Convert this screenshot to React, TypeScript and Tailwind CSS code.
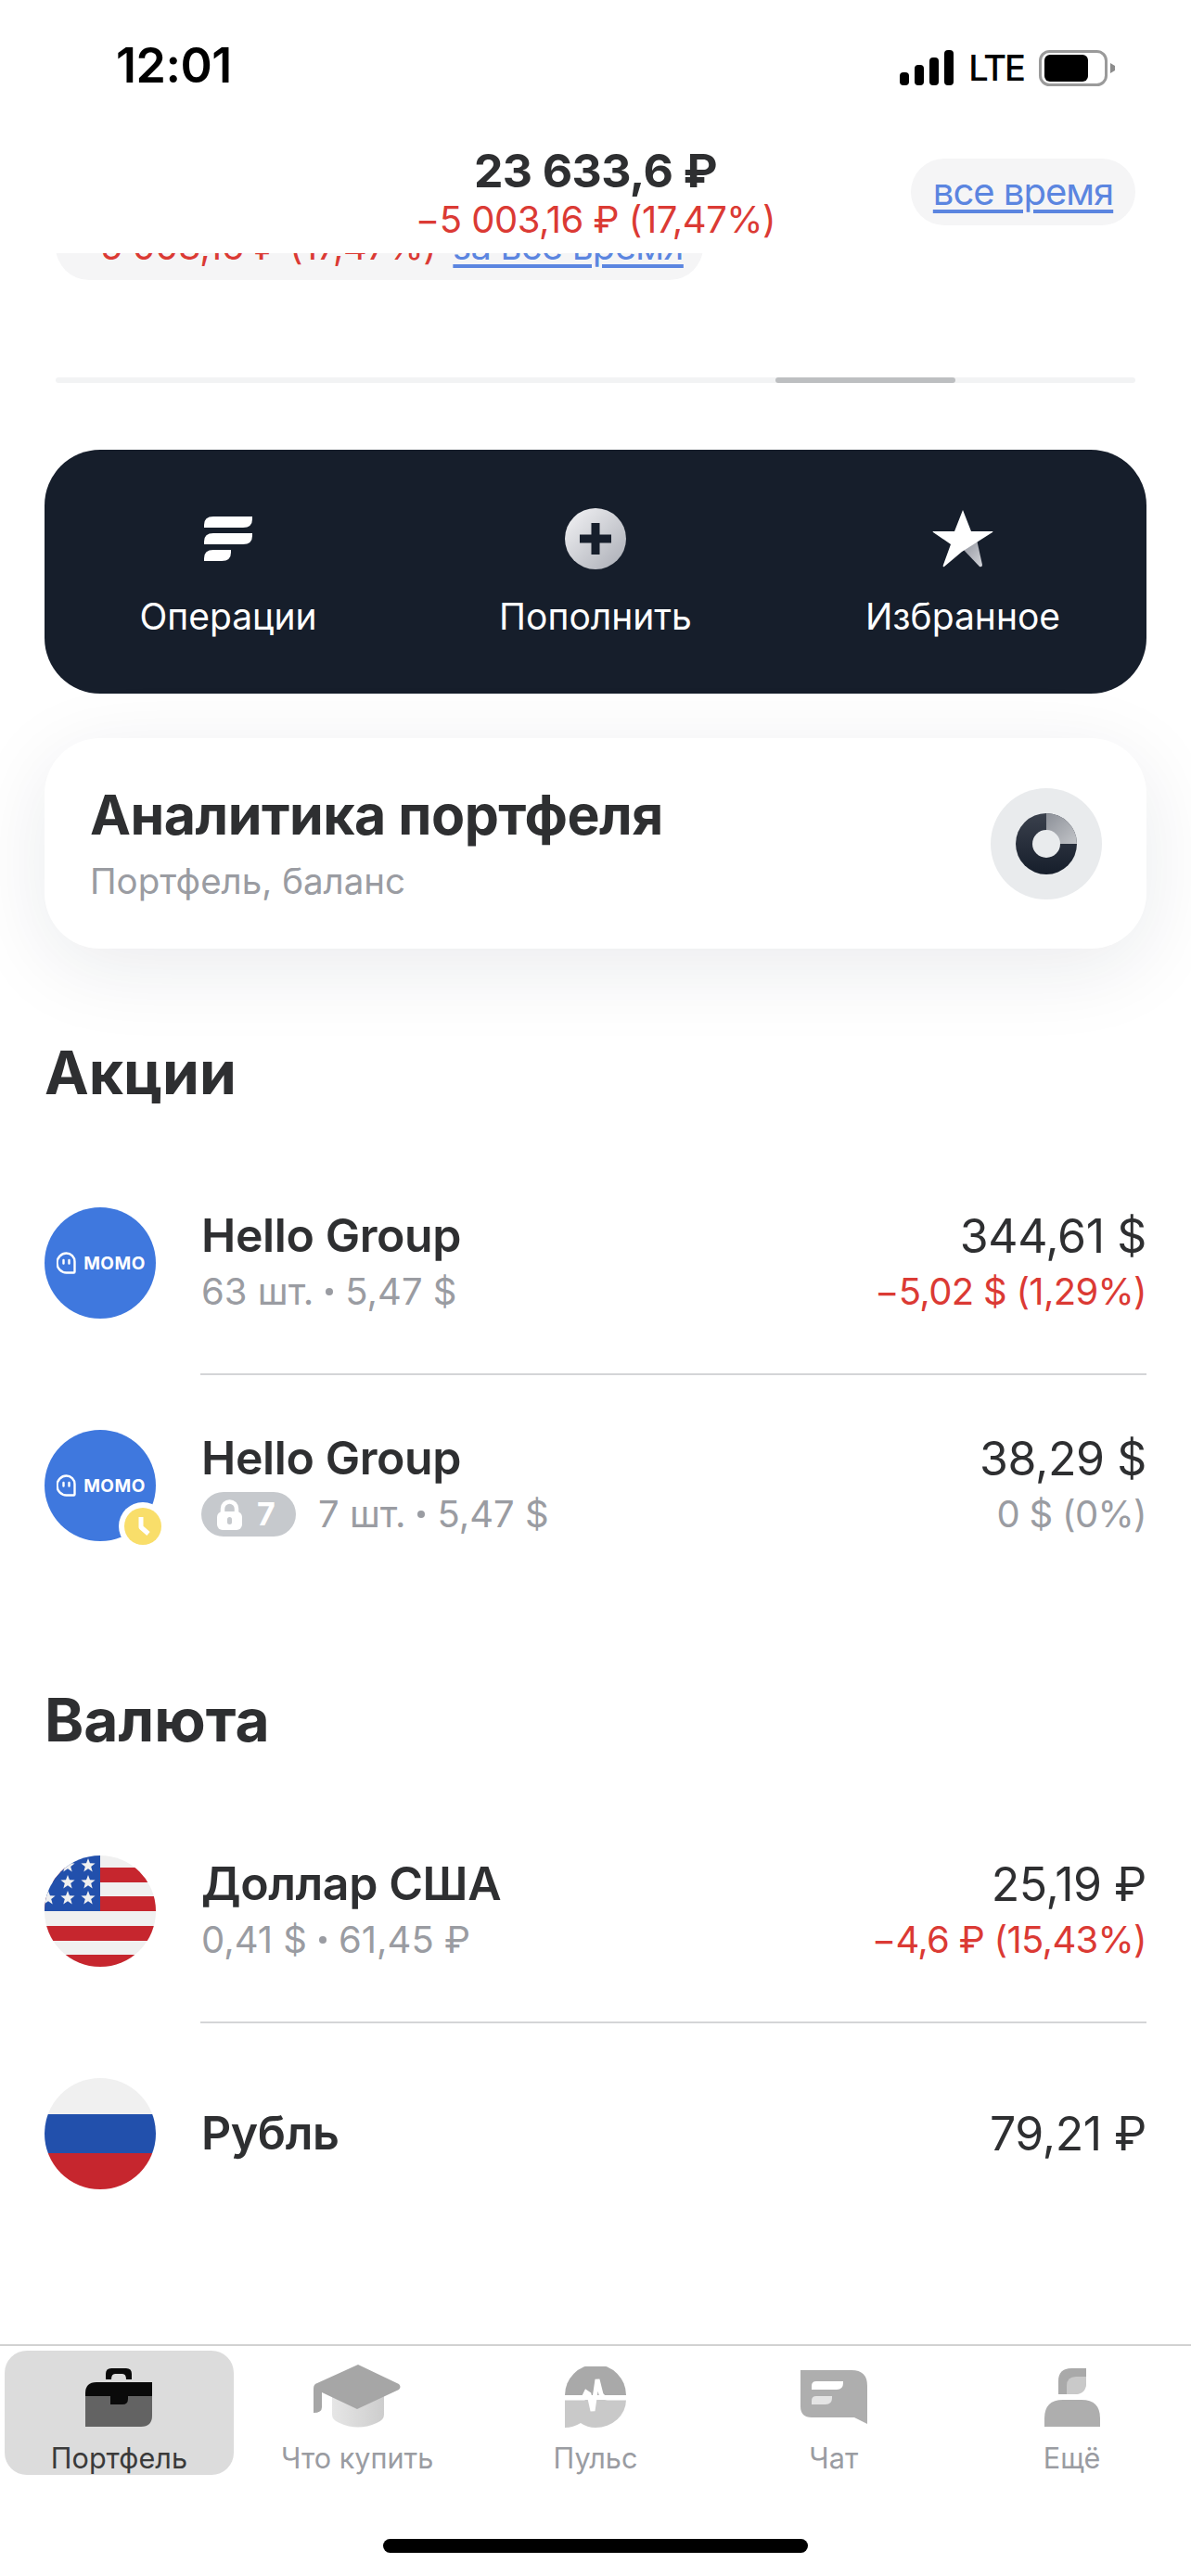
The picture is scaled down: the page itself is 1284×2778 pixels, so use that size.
import React from 'react';

const starPoints = (cx: number, cy: number, r: number) =>
  Array.from({ length: 10 }, (_, i) => {
    const rad = i % 2 === 0 ? r : r * 0.42;
    const a = (Math.PI / 5) * i - Math.PI / 2;
    return `${(cx + rad * Math.cos(a)).toFixed(2)},${(cy + rad * Math.sin(a)).toFixed(2)}`;
  }).join(' ');

const SignalIcon = () => (
  <svg width="58" height="38" viewBox="0 0 58 38" fill="#000">
    <rect x="0" y="24" width="10" height="14" rx="4" />
    <rect x="16" y="16" width="10" height="22" rx="4" />
    <rect x="32" y="8" width="10" height="30" rx="4" />
    <rect x="48" y="0" width="10" height="38" rx="4" />
  </svg>
);

const BatteryIcon = () => (
  <svg width="82" height="39" viewBox="0 0 82 39">
    <rect x="1.5" y="1.5" width="71" height="36" rx="10" fill="none" stroke="#9a9a9a" strokeWidth="3" />
    <rect x="6" y="5" width="47" height="29" rx="6" fill="#000" />
    <path d="M77 14 L82 17 V22 L77 25 Z" fill="#8c8c8c" />
  </svg>
);

const OperationsIcon = () => (
  <svg width="52" height="48" viewBox="0 0 52 48" fill="#fff">
    <path d="M0 9 Q0 0 10 0 H52 V3 Q52 12 42 12 H0 Z" />
    <path d="M0 27 Q0 18 10 18 H52 V21 Q52 30 42 30 H0 Z" />
    <path d="M0 45 Q0 36 10 36 H29 V39 Q29 48 19 48 H0 Z" />
  </svg>
);

const PlusIcon = () => (
  <svg width="66" height="66" viewBox="0 0 66 66">
    <defs>
      <linearGradient id="plusFill" x1="0" y1="0" x2="1" y2="1">
        <stop offset="0" stopColor="#f4f4f6" />
        <stop offset="1" stopColor="#a9acb4" />
      </linearGradient>
    </defs>
    <circle cx="33" cy="33" r="33" fill="url(#plusFill)" />
    <path d="M28.5 16 H37.5 V28.5 H50 V37.5 H37.5 V50 H28.5 V37.5 H16 V28.5 H28.5 Z" fill="#161e2b" />
  </svg>
);

const StarIcon = () => (
  <svg width="66" height="64" viewBox="0 0 66 64">
    <defs>
      <linearGradient id="starFill" x1="0" y1="0" x2="1" y2="1">
        <stop offset="0" stopColor="#8d909a" />
        <stop offset="1" stopColor="#d3d5da" />
      </linearGradient>
    </defs>
    <path d="M32 42 L48 33 L54 60 Q54 63 51 62 Z" fill="url(#starFill)" />
    <path
      d="M33 1 L42 24 H65 Q66 24 65 25 L32 46 L13 62 Q11 63 12 60 L20 38 L1 25 Q0 24 1 24 H24 Z"
      fill="#fff"
    />
  </svg>
);

const DonutIcon = () => (
  <svg width="66" height="66" viewBox="0 0 66 66">
    <defs>
      <linearGradient id="donutDark" x1="0" y1="0" x2="0" y2="1">
        <stop offset="0" stopColor="#3a404c" />
        <stop offset="1" stopColor="#161e2b" />
      </linearGradient>
      <linearGradient id="donutLight" x1="0" y1="0" x2="1" y2="1">
        <stop offset="0" stopColor="#8c9098" />
        <stop offset="1" stopColor="#c2c4c8" />
      </linearGradient>
    </defs>
    <circle cx="33" cy="33" r="33" fill="url(#donutDark)" />
    <path d="M33 0 A33 33 0 0 1 66 33 H33 Z" fill="url(#donutLight)" />
    <circle cx="33" cy="33" r="15" fill="#e9ebed" />
  </svg>
);

const MomoAvatar = () => (
  <div className="flex h-[120px] w-[120px] items-center justify-center gap-[8px] rounded-full bg-[#3f78de] pl-[2px]">
    <svg width="21" height="24" viewBox="0 0 21 24" fill="none" stroke="#fff" strokeWidth="2.4">
      <path d="M10.5 1.5 A9 9 0 0 1 19.5 10.5 V21.5 Q19.5 22.5 18.5 22.5 H10.5 A10 10.5 0 0 1 10.5 1.5 Z" />
      <path d="M7.5 9 V12.5 M13.5 9 V12.5" strokeLinecap="round" />
    </svg>
    <span className="text-[19px] leading-none font-bold tracking-[0.5px] text-white">MOMO</span>
  </div>
);

const UsFlag = () => (
  <svg width="120" height="120" viewBox="0 0 120 120">
    <defs>
      <clipPath id="usClip">
        <circle cx="60" cy="60" r="60" />
      </clipPath>
    </defs>
    <g clipPath="url(#usClip)">
      <rect width="120" height="120" fill="#f0f0f0" />
      <rect y="13" width="120" height="16" fill="#c6262e" />
      <rect y="44" width="120" height="16" fill="#c6262e" />
      <rect y="76" width="120" height="16" fill="#c6262e" />
      <rect y="107" width="120" height="13" fill="#c6262e" />
      <rect width="60" height="60" fill="#2250ac" />
      {[25, 47].map((x) =>
        [11, 29, 46].map((y) => <polygon key={`${x}-${y}`} points={starPoints(x, y, 8)} fill="#f0f0f0" />),
      )}
      <polygon points={starPoints(4, 46, 8)} fill="#f0f0f0" />
    </g>
  </svg>
);

const RuFlag = () => (
  <svg width="120" height="120" viewBox="0 0 120 120">
    <defs>
      <clipPath id="ruClip">
        <circle cx="60" cy="60" r="60" />
      </clipPath>
    </defs>
    <g clipPath="url(#ruClip)">
      <rect width="120" height="39" fill="#f0f0f0" />
      <rect y="39" width="120" height="42" fill="#2250ac" />
      <rect y="81" width="120" height="39" fill="#c6262e" />
    </g>
  </svg>
);

const LockIcon = () => (
  <svg width="27" height="33" viewBox="0 0 27 33">
    <path d="M6 15 V10 A7.5 7.5 0 0 1 21 10 V15" fill="none" stroke="#fff" strokeWidth="4.5" />
    <rect x="0" y="13" width="27" height="20" rx="6" fill="#fff" />
    <rect x="11" y="19" width="5" height="8" rx="2.5" fill="#c6c9cd" />
  </svg>
);

const BriefcaseIcon = () => (
  <svg width="72" height="63" viewBox="0 0 72 63">
    <path d="M22 12 V6 Q22 0 28 0 H44 Q50 0 50 6 V12 H44 Q44 6 40 6 H32 Q28 6 28 12 Z" fill="#0a0a0a" />
    <path d="M0 30 H72 V51 Q72 63 60 63 H0 Z" fill="#636363" />
    <path d="M0 30 V27 Q0 15 12 15 H72 V30 Z" fill="#0a0a0a" />
    <path d="M27 30 H46 V33 Q46 39 40 39 H27 Z" fill="#0a0a0a" />
  </svg>
);

const CapIcon = () => (
  <svg width="95" height="70" viewBox="0 0 95 70">
    <defs>
      <linearGradient id="capBody" x1="0" y1="0" x2="1" y2="0">
        <stop offset="0" stopColor="#e6e6e6" />
        <stop offset="1" stopColor="#cdcdcd" />
      </linearGradient>
    </defs>
    <path d="M20 34 H76 V54 Q76 60 68 63 Q48 72 28 63 Q20 60 20 54 Z" fill="url(#capBody)" />
    <path
      d="M48 0 L92 21 Q95 24 92 27 L47 48 L9 30 V46 Q9 52 0 52 V26 Q0 21 4 20 Z"
      fill="#a6a6a6"
    />
  </svg>
);

const PulseIcon = () => (
  <svg width="66" height="66" viewBox="0 0 66 66">
    <path d="M0 31 A33 33 0 0 1 66 31 Z" fill="#a9a9a9" />
    <path d="M0 36 H66 A33 30 0 0 1 33 66 Q24 66 17 61 Q9 66 0 66 Z" fill="#c9c9c9" />
    <path
      d="M0 34 H20 L23 28 L26 30 L30 48 L35 14 L39 30 Q41 34 46 34 H66"
      fill="none"
      stroke="#fff"
      strokeWidth="5"
    />
  </svg>
);

const ChatIcon = () => (
  <svg width="72" height="58" viewBox="0 0 72 58">
    <path d="M0 0 H55 Q72 0 72 17 V58 L58 51 H12 Q0 51 0 39 Z" fill="#aeaeae" />
    <path d="M12 17 Q12 12 17 12 H46 V14 Q46 21 39 21 H12 Z" fill="#fff" />
    <path d="M12 33 Q12 28 17 28 H34 V30 Q34 37 27 37 H12 Z" fill="#e4e4e4" />
  </svg>
);

const PersonIcon = () => (
  <svg width="60" height="63" viewBox="0 0 60 63">
    <path d="M15 28 V14 Q15 0 29 0 H45 V14 Q45 28 31 28 Z" fill="#a9a9a9" />
    <path d="M24 28 V19 Q24 9 34 9 H45 V16 Q45 28 33 28 Z" fill="#c9c9c9" />
    <path d="M0 63 V54 Q0 34 20 34 H40 Q60 34 60 54 V63 Z" fill="#aeaeae" />
  </svg>
);

type RowProps = {
  avatar: React.ReactNode;
  name: string;
  sub?: React.ReactNode;
  value: string;
  change?: string;
  changeClass?: string;
};

const Dot = () => <span className="mx-[13px] inline-block h-[8px] w-[8px] rounded-full bg-[#9a9ca2] align-middle" />;

const AssetRow = ({ avatar, name, sub, value, change, changeClass }: RowProps) => (
  <div className="flex h-[238px] items-center">
    <div className="relative w-[120px] shrink-0">{avatar}</div>
    <div className="ml-[49px] flex-1 pb-[2px]">
      <div className="text-[50px] leading-[56px] font-semibold tracking-[-0.4px] text-[#2e2f31]">{name}</div>
      {sub && <div className="mt-[8px] flex h-[50px] items-center text-[40px] text-[#9a9ca2]">{sub}</div>}
    </div>
    <div className="pb-[1px] text-right">
      <div className="text-[50px] leading-[56px] tracking-[-0.4px] text-[#2e2f31]">{value}</div>
      {change && (
        <div className={`mt-[7px] h-[50px] text-[40px] leading-[50px] tracking-[-0.7px] ${changeClass}`}>{change}</div>
      )}
    </div>
  </div>
);

const Divider = () => <div className="ml-[168px] h-[2px] bg-[#d4d5d7]" />;

const SectionTitle = ({ children }: { children: React.ReactNode }) => (
  <h2 className="h-[80px] text-[64px] leading-[80px] font-bold text-[#2e2f31]">{children}</h2>
);

const tabs = [
  { label: 'Портфель', icon: <BriefcaseIcon />, active: true },
  { label: 'Что купить', icon: <CapIcon /> },
  { label: 'Пульс', icon: <PulseIcon /> },
  { label: 'Чат', icon: <ChatIcon /> },
  { label: 'Ещё', icon: <PersonIcon /> },
];

export default function App() {
  return (
    <div className="flex h-[2778px] w-[1284px] flex-col overflow-hidden bg-white font-['Inter','Noto_Sans',sans-serif]">
      {/* status bar */}
      <div className="flex h-[140px] items-start justify-between pt-[44px] pr-[82px] pl-[125px]">
        <span className="text-[52px] leading-[54px] font-semibold tracking-[-0.5px] text-black">12:01</span>
        <div className="flex items-start gap-[16px] pt-[10px]">
          <SignalIcon />
          <span className="text-[38px] leading-[38px] font-medium tracking-[-2px] text-black">LTE</span>
          <BatteryIcon />
        </div>
      </div>

      {/* sticky header */}
      <div className="grid h-[133px] grid-cols-[1fr_auto_1fr] pt-[16px]">
        <div />
        <div className="text-center">
          <div className="text-[50px] leading-[56px] font-bold tracking-[-0.6px] text-[#2e2f31]">23 633,6 ₽</div>
          <div className="text-[40px] leading-[50px] tracking-[-0.5px] text-[#db3a34]">−5 003,16 ₽ (17,47%)</div>
        </div>
        <div className="mt-[15px] mr-[60px] flex h-[72px] w-[242px] items-center justify-center justify-self-end rounded-[36px] bg-[#f5f5f6]">
          <span className="text-[40px] tracking-[-1px] text-[#5b85e0] underline underline-offset-[5px]">все время</span>
        </div>
      </div>

      {/* pill scrolled under the header */}
      <div className="ml-[60px] h-[29px] w-[698px] overflow-hidden">
        <div className="mt-[-43px] flex h-[72px] items-center gap-[18px] rounded-[36px] bg-[#f5f5f6] px-[22px] text-[40px] whitespace-nowrap">
          <span className="tracking-[-0.5px] text-[#db3a34]">−5 003,16 ₽ (17,47%)</span>
          <span className="tracking-[-0.7px] text-[#5b85e0] underline underline-offset-[5px]">за все время</span>
        </div>
      </div>

      {/* slider track */}
      <div className="mx-[60px] mt-[105px] h-[6px] rounded-full bg-[#f2f3f4]">
        <div className="ml-[776px] h-[6px] w-[194px] rounded-full bg-[#bdbfc1]" />
      </div>

      <div className="px-[48px]">
        <div className="mt-[72px] grid h-[263px] grid-cols-3 rounded-[60px] bg-[#161e2b] pt-[64px]">
          {[
            { label: 'Операции', icon: <OperationsIcon /> },
            { label: 'Пополнить', icon: <PlusIcon /> },
            { label: 'Избранное', icon: <StarIcon /> },
          ].map((a) => (
            <div key={a.label} className="flex flex-col items-center">
              <div className="flex h-[64px] items-center">{a.icon}</div>
              <div className="mt-[29px] text-[39px] leading-[46px] text-white">{a.label}</div>
            </div>
          ))}
        </div>

        <div className="mt-[48px] flex h-[227px] items-center justify-between rounded-[60px] bg-white pr-[48px] pl-[49px] shadow-[0_20px_90px_rgba(20,30,50,0.09)]">
          <div>
            <div className="text-[59px] leading-[66px] font-bold tracking-[-0.5px] text-[#2e2f31]">Аналитика портфеля</div>
            <div className="mt-[15px] text-[38.5px] leading-[46px] text-[#9a9ca2]">Портфель, баланс</div>
          </div>
          <div className="flex h-[120px] w-[120px] items-center justify-center rounded-full bg-[#e9ebed]">
            <DonutIcon />
          </div>
        </div>

        <div className="mt-[94px] mb-[46px]">
          <SectionTitle>Акции</SectionTitle>
        </div>
        <AssetRow
          avatar={<MomoAvatar />}
          name="Hello Group"
          sub={
            <>
              63 шт.
              <Dot />
              5,47 $
            </>
          }
          value="344,61 $"
          change="−5,02 $ (1,29%)"
          changeClass="text-[#db3a34]"
        />
        <Divider />
        <AssetRow
          avatar={
            <>
              <MomoAvatar />
              <div className="absolute right-[-12px] bottom-[-10px] flex h-[52px] w-[52px] items-center justify-center rounded-full bg-white">
                <svg width="40" height="40" viewBox="0 0 40 40">
                  <circle cx="20" cy="20" r="20" fill="#f9de6a" />
                  <path d="M18 10 V21 L26 28" fill="none" stroke="#fff" strokeWidth="5" strokeLinejoin="round" />
                </svg>
              </div>
            </>
          }
          name="Hello Group"
          sub={
            <>
              <span className="mr-[24px] flex h-[48px] w-[102px] items-center gap-[16px] rounded-full bg-[#c6c9cd] pl-[17px]">
                <LockIcon />
                <span className="text-[34px] leading-none font-bold text-white">7</span>
              </span>
              7 шт.
              <Dot />
              5,47 $
            </>
          }
          value="38,29 $"
          change="0 $ (0%)"
          changeClass="text-[#9a9ca2]"
        />

        <div className="mt-[94px] mb-[47px]">
          <SectionTitle>Валюта</SectionTitle>
        </div>
        <AssetRow
          avatar={<UsFlag />}
          name="Доллар США"
          sub={
            <>
              0,41 $
              <Dot />
              61,45 ₽
            </>
          }
          value="25,19 ₽"
          change="−4,6 ₽ (15,43%)"
          changeClass="text-[#db3a34]"
        />
        <Divider />
        <AssetRow avatar={<RuFlag />} name="Рубль" value="79,21 ₽" />
      </div>

      <div className="flex-1" />

      {/* tab bar */}
      <div className="h-[250px] border-t-2 border-[#d2d2d2] pt-[5px]">
        <div className="grid grid-cols-5">
          {tabs.map((t) => (
            <div
              key={t.label}
              className={`mx-[5px] flex h-[134px] flex-col items-center rounded-[24px] pt-[15px] ${t.active ? 'bg-[#dcdcdc]' : ''}`}
            >
              <div className="flex h-[70px] items-center">{t.icon}</div>
              <div className={`mt-[13px] text-[30.6px] leading-[36px] ${t.active ? 'text-[#3a3a3a]' : 'text-[#9a9ca2]'}`}>
                {t.label}
              </div>
            </div>
          ))}
        </div>
        <div className="mx-auto mt-[69px] h-[15px] w-[458px] rounded-full bg-black" />
      </div>
    </div>
  );
}
